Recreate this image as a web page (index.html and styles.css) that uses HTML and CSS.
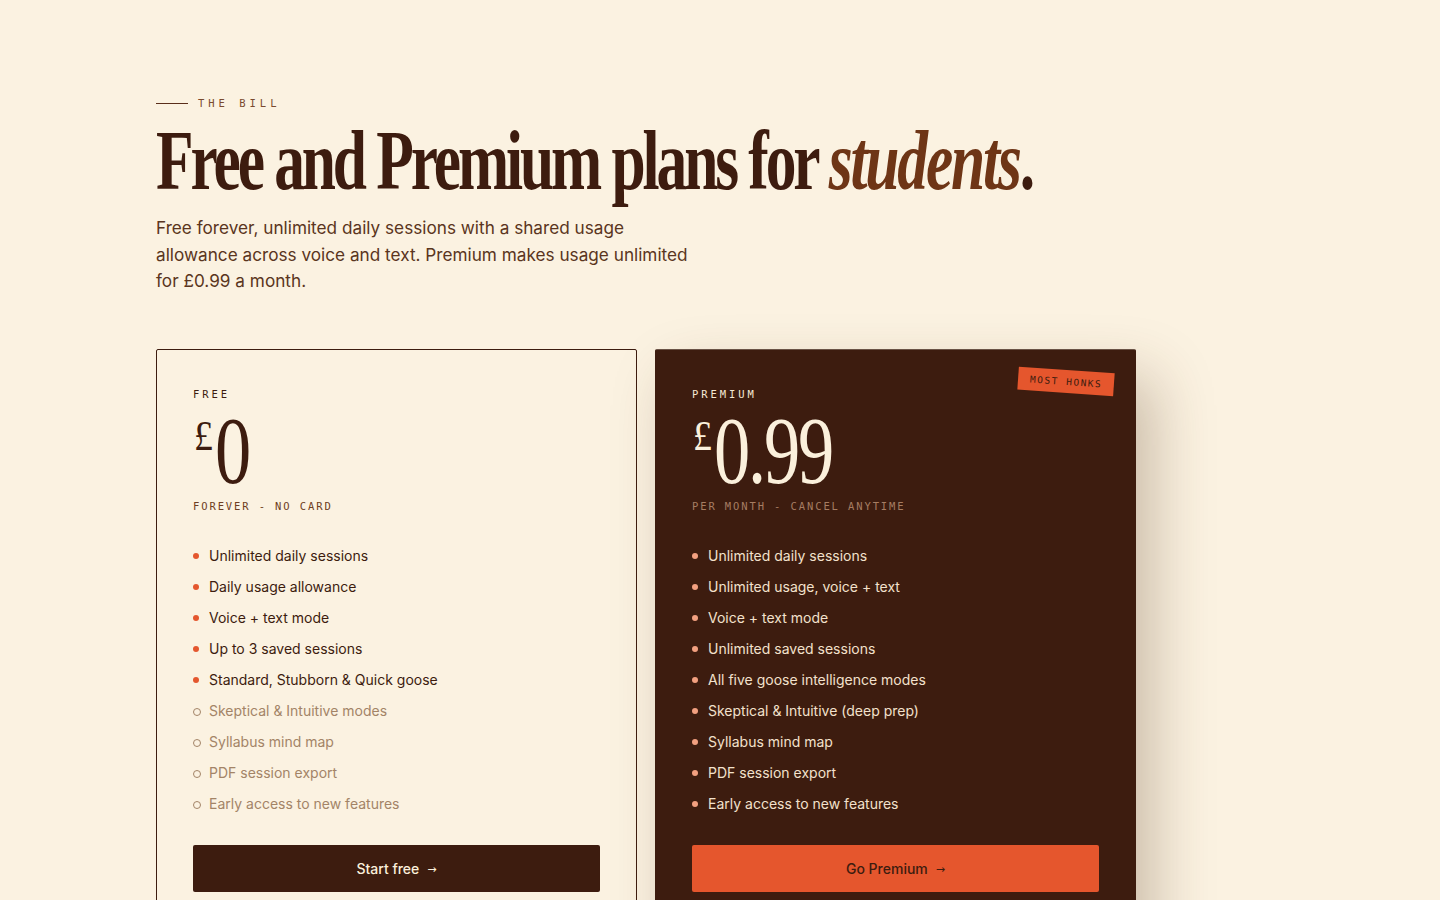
FILE: index.html
```html
<!DOCTYPE html>
<html lang="en">
<head>
<meta charset="utf-8">
<title>The Bill</title>
<link rel="stylesheet" href="styles.css">
</head>
<body>
<main class="page">
  <div class="eyebrow"><span class="eyebrow-line"></span><span class="eyebrow-text">THE BILL</span></div>
  <h1 class="title">Free and Premium plans for <em class="title-em">students</em>.</h1>
  <p class="lede">Free forever, unlimited daily sessions with a shared usage allowance across voice and text. Premium makes usage unlimited for £0.99 a month.</p>

  <div class="plans">
    <section class="card card-free">
      <div class="plan-label">FREE</div>
      <div class="price"><span class="currency">£</span><span class="amount">0</span></div>
      <div class="price-note">FOREVER - NO CARD</div>
      <ul class="features">
        <li class="feature">Unlimited daily sessions</li>
        <li class="feature">Daily usage allowance</li>
        <li class="feature">Voice + text mode</li>
        <li class="feature">Up to 3 saved sessions</li>
        <li class="feature">Standard, Stubborn &amp; Quick goose</li>
        <li class="feature off">Skeptical &amp; Intuitive modes</li>
        <li class="feature off">Syllabus mind map</li>
        <li class="feature off">PDF session export</li>
        <li class="feature off">Early access to new features</li>
      </ul>
      <a class="btn btn-dark" href="#">Start free <span class="arrow">→</span></a>
    </section>

    <section class="card card-premium">
      <div class="badge">MOST HONKS</div>
      <div class="plan-label">PREMIUM</div>
      <div class="price"><span class="currency">£</span><span class="amount">0.99</span></div>
      <div class="price-note">PER MONTH - CANCEL ANYTIME</div>
      <ul class="features">
        <li class="feature">Unlimited daily sessions</li>
        <li class="feature">Unlimited usage, voice + text</li>
        <li class="feature">Voice + text mode</li>
        <li class="feature">Unlimited saved sessions</li>
        <li class="feature">All five goose intelligence modes</li>
        <li class="feature">Skeptical &amp; Intuitive (deep prep)</li>
        <li class="feature">Syllabus mind map</li>
        <li class="feature">PDF session export</li>
        <li class="feature">Early access to new features</li>
      </ul>
      <a class="btn btn-orange" href="#">Go Premium <span class="arrow">→</span></a>
    </section>
  </div>
</main>
</body>
</html>
```

FILE: styles.css
```css
* { box-sizing: border-box; }
html, body { margin: 0; padding: 0; }
body {
  background: #fbf2e1;
  color: #3d1c0f;
  font-family: "Inter", "Liberation Sans", sans-serif;
  overflow: hidden;
}
.page {
  width: 980px;
  margin-left: 156px;
  padding-top: 96px;
}
.eyebrow {
  display: flex;
  align-items: center;
  gap: 10px;
  height: 14px;
}
.eyebrow-line {
  width: 32px;
  height: 1px;
  background: #5a2e1a;
}
.eyebrow-text {
  font-family: "DejaVu Sans Mono", "Liberation Mono", monospace;
  font-size: 10.5px;
  letter-spacing: 0.38em;
  color: #7a4a2e;
}
.title {
  margin: 9px 0 0;
  font-family: "Liberation Serif", "DejaVu Serif", serif;
  font-weight: 700;
  font-size: 84px;
  line-height: 1;
  letter-spacing: -0.05em;
  color: #3d1c0f;
  white-space: nowrap;
  transform: scaleX(0.731);
  transform-origin: left center;
}
.title-em {
  font-style: italic;
  font-weight: 700;
  color: #6e3516;
  letter-spacing: -0.035em;
}
.lede {
  margin: 12px 0 0;
  max-width: 545px;
  font-size: 17.2px;
  line-height: 26.5px;
  color: #5a3520;
}
.plans {
  display: grid;
  grid-template-columns: 481px 481px;
  gap: 18px;
  margin-top: 54px;
}
.card {
  position: relative;
  padding: 37px 36px 60px;
  border: 1px solid #3d1c0f;
  border-radius: 2px;
  min-height: 600px;
}
.card-free { background: #fbf2e1; }
.card-premium {
  background: #3d1c0f;
  border-top-color: #6a5346;
  color: #f6e8d3;
  box-shadow: 18px 28px 60px rgba(80, 45, 20, 0.28);
}
.plan-label {
  font-family: "DejaVu Sans Mono", "Liberation Mono", monospace;
  font-size: 10.5px;
  letter-spacing: 0.28em;
  line-height: 14px;
  color: #3d1c0f;
}
.card-premium .plan-label { color: #f6e8d3; }
.price {
  display: flex;
  align-items: flex-start;
  margin-top: 8px;
  height: 84px;
  font-family: "Liberation Serif", "DejaVu Serif", serif;
  color: #3d1c0f;
}
.card-premium .price { color: #fbf0dc; }
.currency {
  font-size: 42px;
  line-height: 1;
  margin-top: 6px;
  margin-right: 1px;
  transform: scaleX(0.9);
}
.amount {
  font-size: 96px;
  line-height: 84px;
  letter-spacing: -0.03em;
  transform: scaleX(0.755);
  transform-origin: left top;
}
.price-note {
  margin-top: 6px;
  font-family: "DejaVu Sans Mono", "Liberation Mono", monospace;
  font-size: 10.5px;
  letter-spacing: 0.18em;
  line-height: 14px;
  color: #6e3e22;
}
.card-premium .price-note { color: #a67d62; }
.features {
  list-style: none;
  margin: 27px 0 0;
  padding: 0;
  display: flex;
  flex-direction: column;
}
.feature {
  position: relative;
  padding-left: 16px;
  font-size: 14px;
  line-height: 31px;
  color: #3d1c0f;
}
.feature::before {
  content: "";
  position: absolute;
  left: 0;
  top: 13px;
  width: 6px;
  height: 6px;
  border-radius: 50%;
  background: #e4572e;
}
.feature.off { color: #a38467; }
.feature.off::before {
  background: transparent;
  border: 1px solid #a38467;
}
.card-premium .feature { color: #f3e1cc; }
.card-premium .feature::before { background: #f3a080; }
.btn {
  display: flex;
  align-items: center;
  justify-content: center;
  gap: 8px;
  height: 47px;
  margin-top: 26px;
  border-radius: 2px;
  font-size: 14px;
  font-weight: 500;
  text-decoration: none;
}
.arrow {
  font-family: "DejaVu Sans", "Liberation Sans", sans-serif;
  font-weight: 400;
  font-size: 11px;
  margin-top: 3px;
}
.btn-dark { background: #3d1c0f; color: #fbf0dc; }
.btn-orange { background: #e5562d; color: #3d1c0f; }
.badge {
  position: absolute;
  top: 20px;
  right: 21px;
  padding: 6px 12px;
  background: #e5562d;
  color: #3d1c0f;
  font-family: "DejaVu Sans Mono", "Liberation Mono", monospace;
  font-size: 9.5px;
  letter-spacing: 0.16em;
  transform: rotate(4deg);
}
```
